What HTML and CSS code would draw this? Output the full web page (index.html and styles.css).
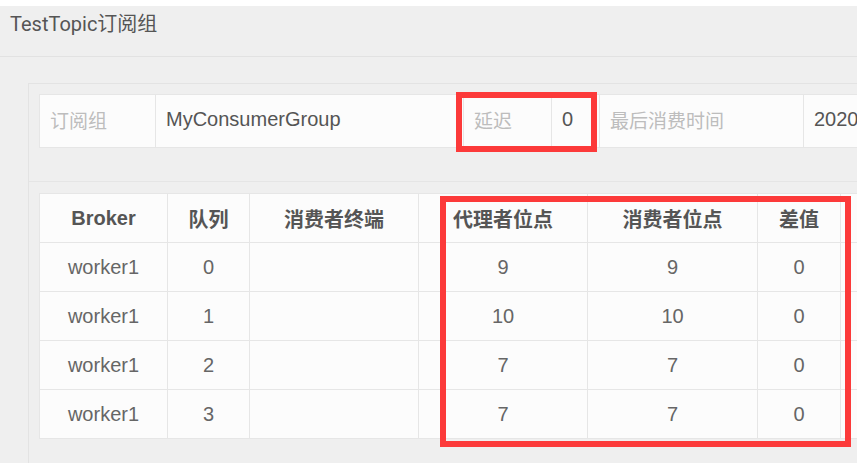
FILE: index.html
```html
<!DOCTYPE html>
<html lang="zh-CN">
<head>
<meta charset="utf-8">
<title>TestTopic订阅组</title>
<link rel="stylesheet" href="styles.css">
</head>
<body>
<div class="modal">
  <div class="modal-title">TestTopic订阅组</div>
  <div class="modal-body">
    <div class="panel">
      <div class="panel-section info-section">
        <table class="info">
          <colgroup>
            <col class="c-i1"><col class="c-i2"><col class="c-i3"><col class="c-i4"><col class="c-i5"><col class="c-i6">
          </colgroup>
          <tr>
            <td class="label">订阅组</td>
            <td class="value">MyConsumerGroup</td>
            <td class="label">延迟</td>
            <td class="value">0</td>
            <td class="label">最后消费时间</td>
            <td class="value">2020-04-17 15:32:08</td>
          </tr>
        </table>
      </div>
      <div class="panel-section grid-section">
        <table class="grid">
          <colgroup>
            <col class="c-g1"><col class="c-g2"><col class="c-g3"><col class="c-g4"><col class="c-g5"><col class="c-g6"><col class="c-g7">
          </colgroup>
          <thead>
            <tr><th>Broker</th><th>队列</th><th>消费者终端</th><th>代理者位点</th><th>消费者位点</th><th>差值</th><th></th></tr>
          </thead>
          <tbody>
            <tr><td>worker1</td><td>0</td><td></td><td>9</td><td>9</td><td>0</td><td></td></tr>
            <tr><td>worker1</td><td>1</td><td></td><td>10</td><td>10</td><td>0</td><td></td></tr>
            <tr><td>worker1</td><td>2</td><td></td><td>7</td><td>7</td><td>0</td><td></td></tr>
            <tr><td>worker1</td><td>3</td><td></td><td>7</td><td>7</td><td>0</td><td></td></tr>
          </tbody>
        </table>
      </div>
    </div>
  </div>
</div>
<div class="mark mark-lag"></div>
<div class="mark mark-offsets"></div>
</body>
</html>
```

FILE: styles.css
```css
html, body {
  margin: 0;
  padding: 0;
  background: #ffffff;
  width: 857px;
  height: 472px;
  overflow: hidden;
  position: relative;
}

.modal {
  margin-top: 6px;
  background: #efefef;
  height: 457px;
  overflow: hidden;
}

.modal-title {
  height: 44px;
  padding: 6px 0 0 10px;
  font-family: Roboto, "Noto Sans CJK SC", sans-serif;
  font-size: 20px;
  line-height: 24px;
  color: #555555;
  border-bottom: 1px solid #e2e2e2;
}

.modal-body {
  padding: 26px 0 0 28px;
}

.panel {
  border: 1px solid #e3e3e3;
  border-right: none;
  width: 900px;
  height: 420px;
  background: #efefef;
}

.panel-section {
  padding-left: 10px;
}

.info-section {
  padding-top: 10px;
  height: 87px;
  border-bottom: 1px solid #e5e5e5;
}

.grid-section {
  padding-top: 11px;
}

table {
  border-collapse: collapse;
  table-layout: fixed;
  background: #fcfcfc;
  font-family: "Liberation Sans", "Noto Sans CJK SC", sans-serif;
  font-size: 20px;
}

td, th {
  border: 1px solid #e6e6e6;
  padding: 0 10px;
  white-space: nowrap;
  overflow: hidden;
}

.info { width: 900px; }
.info td {
  height: 49px;
  padding-bottom: 3px;
}
.c-i1 { width: 116px; }
.c-i2 { width: 308px; }
.c-i3 { width: 88px; }
.c-i4 { width: 48px; }
.c-i5 { width: 204px; }
.c-i6 { width: 136px; }

.info .label {
  color: #bdbdbd;
  font-size: 19px;
}

.info .value {
  color: #555555;
}

.grid { width: 870px; }
.c-g1 { width: 128px; }
.c-g2 { width: 82px; }
.c-g3 { width: 169px; }
.c-g4 { width: 169px; }
.c-g5 { width: 170px; }
.c-g6 { width: 83px; }
.c-g7 { width: 69px; }

.grid th, .grid td {
  text-align: center;
  height: 48px;
}

.grid th {
  color: #555555;
  font-weight: bold;
}

.grid td {
  color: #666666;
}

.mark {
  position: absolute;
  box-sizing: border-box;
  border: 6.5px solid #fc3a3a;
}

.mark-lag {
  left: 456px;
  top: 92px;
  width: 141px;
  height: 60px;
}

.mark-offsets {
  left: 440px;
  top: 196px;
  width: 411px;
  height: 251px;
}
```
